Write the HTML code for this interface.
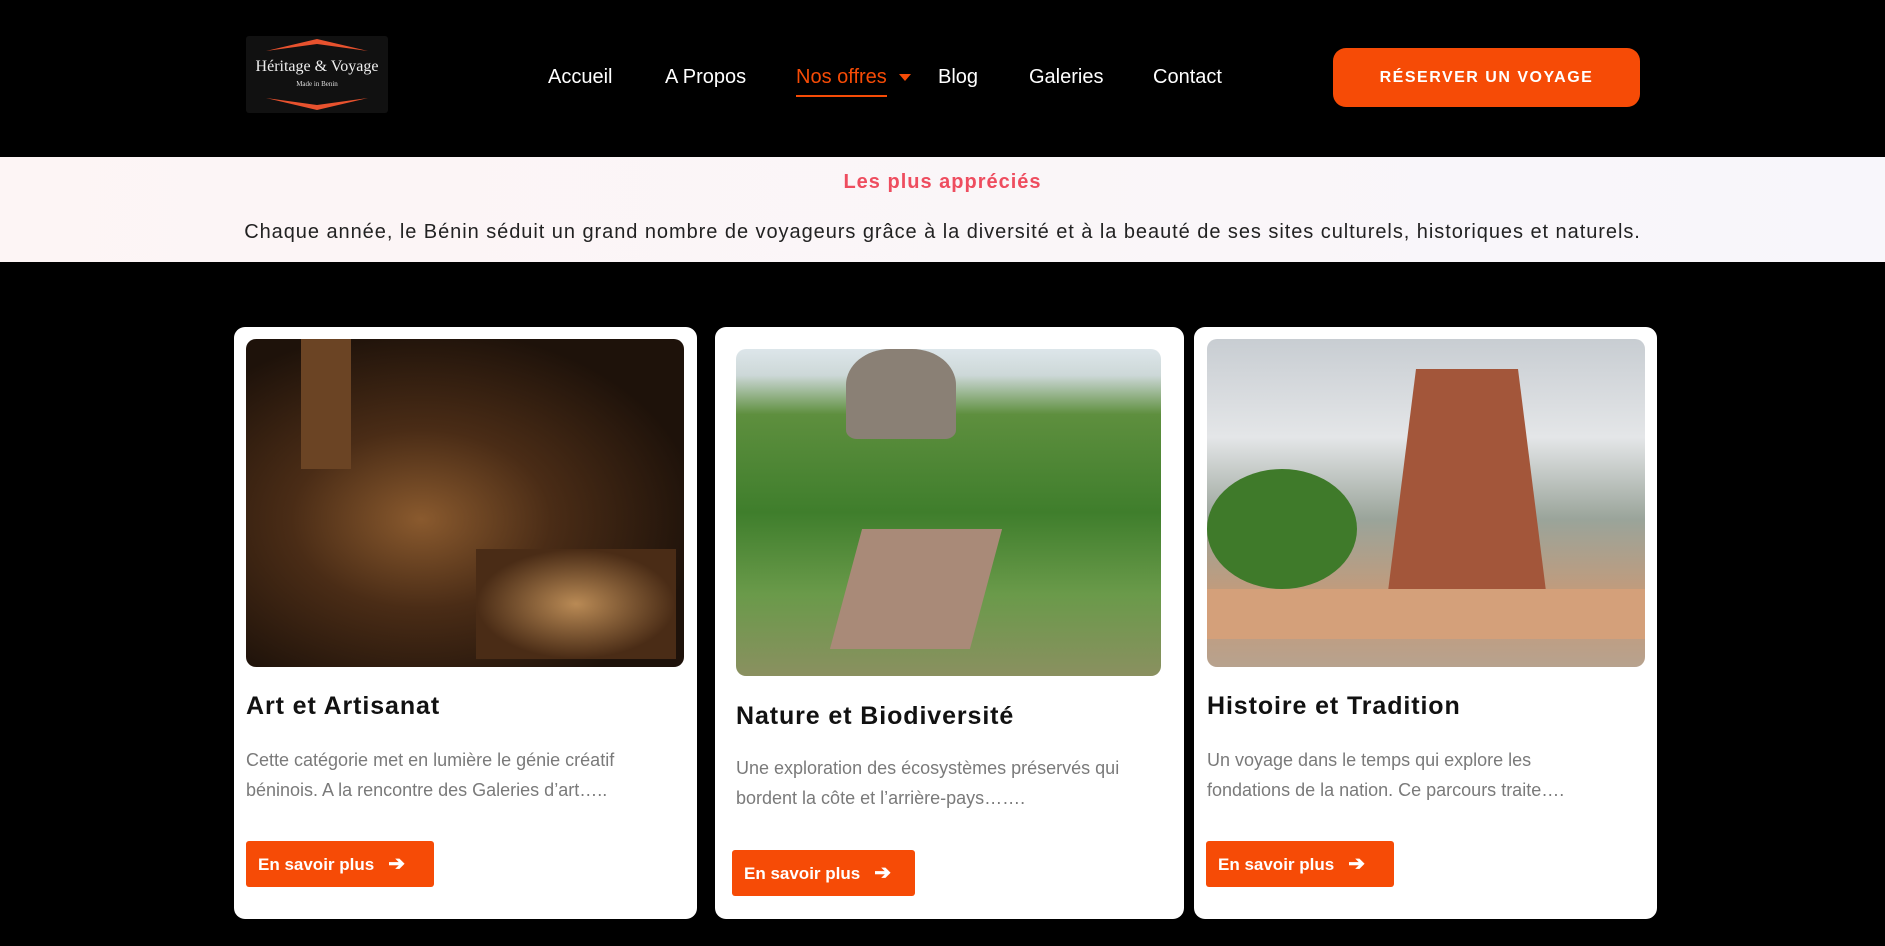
<!DOCTYPE html>
<html><head><meta charset="utf-8"><style>
*{margin:0;padding:0;box-sizing:border-box}
body{width:1885px;height:946px;background:#000;font-family:"Liberation Sans",sans-serif;position:relative;overflow:hidden}
.abs{position:absolute}
.nav a{position:absolute;top:66px;color:#fff;font-size:20px;text-decoration:none;white-space:nowrap}
.card{position:absolute;background:#fff;border-radius:11px}
.img{position:absolute;border-radius:10px;overflow:hidden}
.t{position:absolute;font-size:25px;font-weight:bold;color:#111;white-space:nowrap;letter-spacing:.9px}
.d{position:absolute;font-size:18px;line-height:30px;color:#7a7a7a;white-space:nowrap}
.b{position:absolute;background:#f64b06;color:#fff;font-size:17px;font-weight:bold;border-radius:3px;padding-left:12px;line-height:46px;height:46px}
.b span{font-size:20px;margin-left:14px}
</style></head><body>
<div class="abs" style="left:246px;top:36px;width:142px;height:77px;background:#111;border-radius:3px">
<svg width="142" height="77" style="position:absolute;left:0;top:0"><polygon points="20,15 71,3 122,15 71,8" fill="#e8522e"/><polygon points="20,62 71,74 122,62 71,69" fill="#e8522e"/></svg>
<div class="abs" style="left:0;width:142px;top:22px;text-align:center;color:#eee;font-family:'Liberation Serif',serif;font-size:16px">Héritage &amp; Voyage</div>
<div class="abs" style="left:0;width:142px;top:44px;text-align:center;color:#ddd;font-family:'Liberation Serif',serif;font-size:7px">Made in Benin</div>
</div>
<div class="nav">
<a style="left:548px">Accueil</a>
<a style="left:665px">A Propos</a>
<a style="left:796px;color:#f64b06;border-bottom:2px solid #f64b06;padding-bottom:6px">Nos offres</a>
<span class="abs" style="left:899px;top:74px;width:0;height:0;border-left:6px solid transparent;border-right:6px solid transparent;border-top:7px solid #f64b06"></span>
<a style="left:938px">Blog</a>
<a style="left:1029px">Galeries</a>
<a style="left:1153px">Contact</a>
</div>
<div class="abs" style="left:1333px;top:48px;width:307px;height:59px;background:#f64b06;border-radius:13px;color:#fff;font-size:16px;font-weight:bold;letter-spacing:1.5px;text-align:center;line-height:59px">RÉSERVER UN VOYAGE</div>
<div class="abs" style="left:0;top:157px;width:1885px;height:105px;background:linear-gradient(90deg,#fdf5f5,#f8f6fb)">
<div class="abs" style="left:0;width:1885px;top:14px;text-align:center;color:#ee4d5f;font-size:20px;font-weight:bold;letter-spacing:1px">Les plus appréciés</div>
<div class="abs" style="left:0;width:1885px;top:64px;text-align:center;color:#222;font-size:20px;letter-spacing:.95px">Chaque année, le Bénin séduit un grand nombre de voyageurs grâce à la diversité et à la beauté de ses sites culturels, historiques et naturels.</div>
</div>

<div class="card" style="left:234px;top:327px;width:463px;height:592px"></div>
<div class="card" style="left:715px;top:327px;width:469px;height:592px"></div>
<div class="card" style="left:1194px;top:327px;width:463px;height:592px"></div>

<div class="img" style="left:246px;top:339px;width:438px;height:328px;background:radial-gradient(ellipse at 40% 55%,#8a5a2e 0%,#4a2c16 35%,#1e120a 75%)">
<div class="abs" style="left:55px;top:0;width:50px;height:130px;background:#6b4424"></div>
<div class="abs" style="left:230px;top:210px;width:200px;height:110px;background:radial-gradient(#b98a55,#4a2c16 70%)"></div>
</div>
<div class="img" style="left:736px;top:349px;width:425px;height:327px;background:linear-gradient(180deg,#dde6ea 0%,#cdd8d8 8%,#5e8f3e 20%,#3f7e2c 50%,#6a9a4a 75%,#8a9060 100%)">
<div class="abs" style="left:110px;top:0;width:110px;height:90px;background:#8a8075;border-radius:40% 40% 10% 10%"></div>
<div class="abs" style="left:110px;top:180px;width:140px;height:120px;background:#a98a78;transform:skewX(-15deg)"></div>
</div>
<div class="img" style="left:1207px;top:339px;width:438px;height:328px;background:linear-gradient(180deg,#c8cdd2 0%,#e4e6e8 30%,#9aa49a 55%,#c79a78 80%,#b7a28e 100%)">
<div class="abs" style="left:0;top:130px;width:150px;height:120px;background:#3f7a2a;border-radius:50%"></div>
<div class="abs" style="left:175px;top:30px;width:170px;height:270px;background:#a3563a;clip-path:polygon(20% 0,80% 0,100% 100%,0 100%)"></div>
<div class="abs" style="left:0;top:250px;width:438px;height:50px;background:#d4a07a"></div>
</div>

<div class="t" style="left:246px;top:692px">Art et Artisanat</div>
<div class="t" style="left:736px;top:702px">Nature et Biodiversité</div>
<div class="t" style="left:1207px;top:692px">Histoire et Tradition</div>

<div class="d" style="left:246px;top:745px">Cette catégorie met en lumière le génie créatif<br>béninois. A la rencontre des Galeries d’art…..</div>
<div class="d" style="left:736px;top:753px">Une exploration des écosystèmes préservés qui<br>bordent la côte et l’arrière-pays…….</div>
<div class="d" style="left:1207px;top:745px">Un voyage dans le temps qui explore les<br>fondations de la nation. Ce parcours traite….</div>

<div class="b" style="left:246px;top:841px;width:188px">En savoir plus<span>➔</span></div>
<div class="b" style="left:732px;top:850px;width:183px">En savoir plus<span>➔</span></div>
<div class="b" style="left:1206px;top:841px;width:188px">En savoir plus<span>➔</span></div>
</body></html>
